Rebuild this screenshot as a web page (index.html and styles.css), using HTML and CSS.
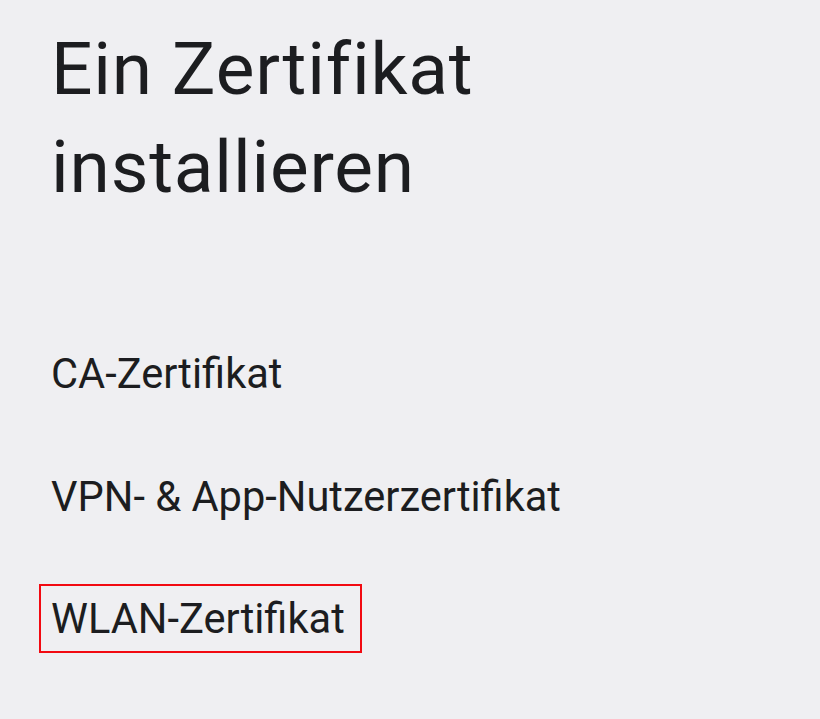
FILE: index.html
```html
<!DOCTYPE html>
<html lang="de">
<head>
  <meta charset="UTF-8">
  <title>Ein Zertifikat installieren</title>
  <link rel="stylesheet" href="styles.css">
</head>
<body>

  <div class="page">
    <h1 class="title">Ein Zertifikat installieren</h1>

    <ul class="options">
      <li><span class="option">CA-Zertifikat</span></li>
      <li><span class="option">VPN- &amp; App-Nutzerzertifikat</span></li>
      <li><span class="option marked">WLAN-Zertifikat</span></li>
    </ul>
  </div>

</body>
</html>
```

FILE: styles.css
```css
body {
  font-family: Roboto, "Noto Sans", sans-serif;
  background: #efeff2;
  color: #1c1d20;
  margin: 0;
  padding: 0;
}

.page {
  padding: 20px 40px 0 51px;
}

.title {
  font-size: 73px;
  font-weight: 400;
  letter-spacing: 0.8px;
  line-height: 98px;
  margin: 0;
  width: 500px;
}

.options {
  list-style: none;
  padding: 0;
  margin: 125px 0 0 0;
}

.options li {
  display: flex;
  align-items: flex-start;
  height: 122.5px;
}

.option {
  font-size: 41.6px;
  line-height: 65px;
}

.marked {
  outline: 2px solid #f20a12;
  margin-left: -10px;
  padding: 0 15px 0 10px;
}
```
